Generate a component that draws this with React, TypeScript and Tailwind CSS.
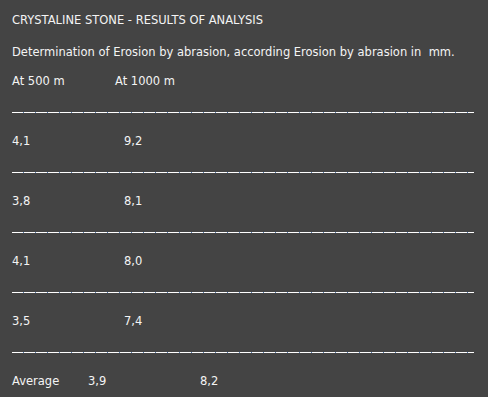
const rows = [
  ['4,1', '9,2'],
  ['3,8', '8,1'],
  ['4,1', '8,0'],
  ['3,5', '7,4'],
]

function Dashes() {
  return (
    <div className="h-[30px] flex items-center">
      <div className="h-px w-[462px] bg-[repeating-linear-gradient(90deg,#ffffff_0_11px,#5a7fb0_11px_12px)]" />
    </div>
  )
}

export default function App() {
  return (
    <div className="w-[488px] h-[397px] bg-[#444444] text-[#f4f4f4] text-[11.5px] font-['DejaVu_Sans',sans-serif] px-3 pt-[6px] overflow-hidden">
      <div className="h-[30px] flex items-center">CRYSTALINE STONE - RESULTS OF ANALYSIS</div>
      <div className="h-[30px] mt-[2px] flex items-center">
        Determination of Erosion by abrasion, according Erosion by abrasion in&nbsp; mm.
      </div>
      <div className="h-[30px] -mt-[1px] flex items-center">
        <span className="w-[103px]">At 500 m</span>
        <span>At 1000 m</span>
      </div>
      {rows.map((r, i) => (
        <div key={i}>
          <Dashes />
          <div className="h-[30px] flex items-center">
            <span className="w-[112px]">{r[0]}</span>
            <span>{r[1]}</span>
          </div>
        </div>
      ))}
      <Dashes />
      <div className="h-[30px] flex items-center">
        <span className="w-[76px]">Average</span>
        <span className="w-[112px]">3,9</span>
        <span>8,2</span>
      </div>
    </div>
  )
}
